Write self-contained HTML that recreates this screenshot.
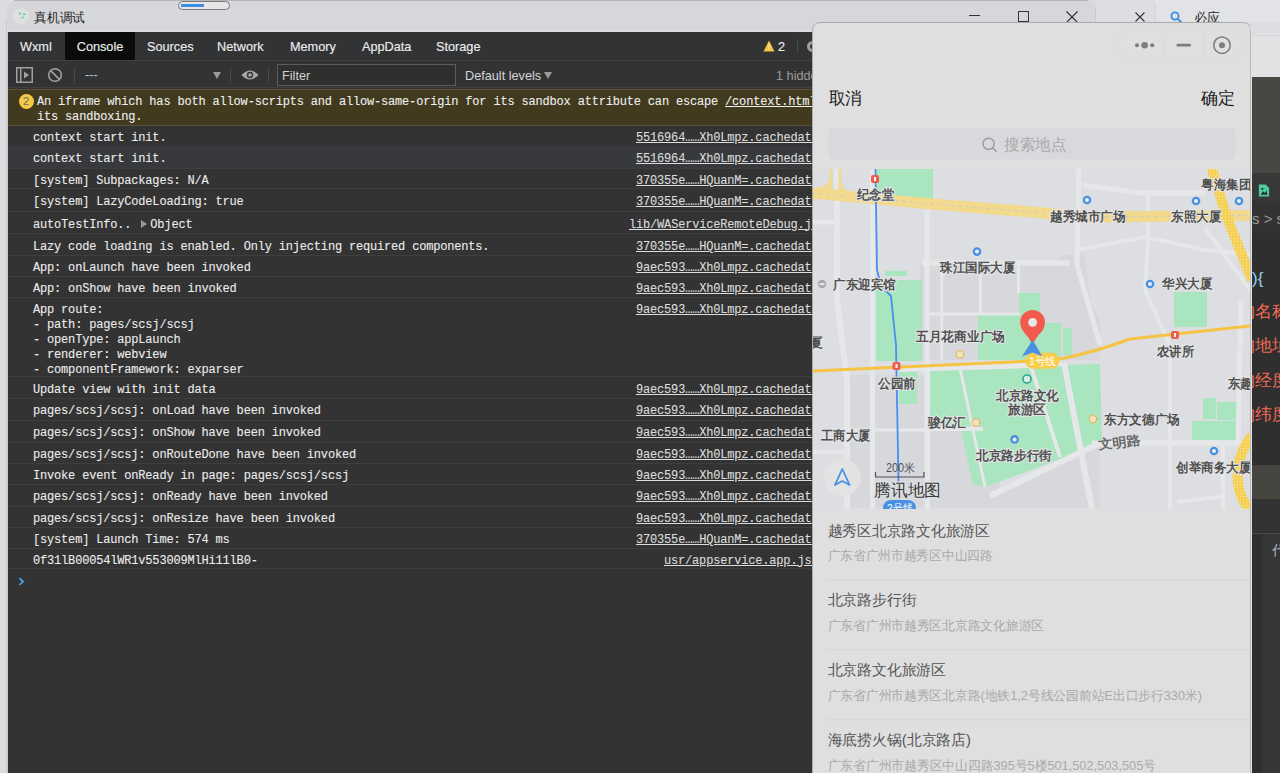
<!DOCTYPE html>
<html><head><meta charset="utf-8">
<style>
*{margin:0;padding:0;box-sizing:border-box}
html,body{width:1280px;height:773px;overflow:hidden;background:#dadcdf;font-family:"Liberation Sans",sans-serif}
.abs{position:absolute}
#titlebar{position:absolute;left:7px;top:1px;width:1089px;height:31px;background:#d6d7da;border-top-left-radius:8px;border-top-right-radius:8px}
#tab2{position:absolute;left:1096px;top:0;width:60px;height:32px;background:#dddee1;border-top-right-radius:8px;border-right:1px solid #d2d3d6}
#dev{position:absolute;left:8px;top:32px;width:1272px;height:741px;background:#333333;overflow:hidden}
#tabs{position:absolute;left:0;top:0;width:1272px;height:29px;background:#323335;border-bottom:1px solid #3f4042}
.tab{position:absolute;top:0;height:27px;line-height:30px;font-size:12.7px;color:#ececec;-webkit-text-stroke:0.15px currentColor}
#toolbar{position:absolute;left:0;top:29px;width:1272px;height:27px;background:#323335;border-bottom:1px solid #3f4042}
.tb{position:absolute;font-size:12.7px;color:#d6d6d6;line-height:28px;top:0}
.mono{font-family:"Liberation Mono",monospace;font-size:12px;letter-spacing:-0.18px;color:#ececec;white-space:pre;-webkit-text-stroke:0.1px currentColor}
.row{position:absolute;left:0;width:1272px;border-bottom:1px solid #3e3e3e}
.row .t{position:absolute;left:25px;margin-top:2px}
.row .l{position:absolute;text-decoration:underline;color:#dcdcdc;margin-top:2px}
.tri{display:inline-block;width:0;height:0;border-left:6px solid #9a9a9a;border-top:4.5px solid transparent;border-bottom:4.5px solid transparent;margin-left:2.5px;margin-right:3.5px;vertical-align:0px}
#warn{position:absolute;left:0;top:57px;width:1272px;height:37px;background:#413a1e;border-top:1px solid #5a5230;border-bottom:1px solid #5a5230}
#phone{position:absolute;left:812px;top:22px;width:438px;height:751px;background:#dfdfdf;border-top-left-radius:8px;border-top-right-radius:8px;overflow:hidden}
#rstrip{position:absolute;left:1250px;top:22px;width:30px;height:751px;background:#e2e2e4}
</style></head><body>
<div class="abs" style="left:6px;top:20px;width:2px;height:753px;background:#c9cbce"></div>
<div id="titlebar"></div>
<div class="abs" style="left:14px;top:0;width:1074px;height:1px;background:#b4b5b7"></div>
<div class="abs" style="left:7px;top:30px;width:1089px;height:2px;background:#dcdde0"></div>
<div class="abs" style="left:1096px;top:0;width:184px;height:40px;background:#e2e3e6"></div>
<div id="tab2"></div>
<div class="abs" style="left:1095px;top:8px;width:1px;height:24px;background:#c8c9cc"></div>
<div class="abs" style="left:13px;top:8px;width:16px;height:16px;border-radius:50%;background:#dfe0e2"></div>
<svg class="abs" style="left:17px;top:11px" width="10" height="8" viewBox="0 0 10 8"><path d="M2 1.5 L4 3.5" stroke="#58d68d" stroke-width="1.2"/><rect x="6" y="2.5" width="2.5" height="1.5" fill="#58d68d"/><rect x="4" y="5.5" width="3" height="2" fill="#7ee0a8"/></svg>
<svg class="abs" style="left:34px;top:9px" width="52" height="16"><text x="0" y="13" font-size="13" fill="#262626" textLength="51" lengthAdjust="spacingAndGlyphs">真机调试</text></svg>
<div class="abs" style="left:178px;top:1px;width:52px;height:9px;border-radius:5px;background:#e6e6e6;border:1.5px solid #7b7b7b"></div>
<div class="abs" style="left:181px;top:4px;width:23px;height:3px;background:#3d8ee8"></div>
<div class="abs" style="left:969px;top:15px;width:11px;height:1.2px;background:#333"></div>
<div class="abs" style="left:1018px;top:11px;width:11px;height:11px;border:1.2px solid #333"></div>
<svg class="abs" style="left:1066px;top:11px" width="12" height="12" viewBox="0 0 12 12"><path d="M0.5 0.5 L11.5 11.5 M11.5 0.5 L0.5 11.5" stroke="#333" stroke-width="1.1"/></svg>
<svg class="abs" style="left:1135px;top:12px" width="10" height="10" viewBox="0 0 10 10"><path d="M0.5 0.5 L9.5 9.5 M9.5 0.5 L0.5 9.5" stroke="#333" stroke-width="1.1"/></svg>
<svg class="abs" style="left:1170px;top:11px" width="13" height="13" viewBox="0 0 13 13"><circle cx="5" cy="5" r="3.6" fill="none" stroke="#3b8ee6" stroke-width="1.8"/><path d="M7.6 7.6 L11.5 11.5" stroke="#3b8ee6" stroke-width="2"/></svg>
<svg class="abs" style="left:1194px;top:9px" width="28" height="16"><text x="0" y="13" font-size="13" fill="#262626" textLength="26" lengthAdjust="spacingAndGlyphs">必应</text></svg>
<div id="dev">
  <div id="tabs">
    <div class="tab" style="left:12px">Wxml</div>
    <div class="tab" style="left:57px;width:70px;height:28px;background:#0b0b0b;text-align:center">Console</div>
    <div class="tab" style="left:139px">Sources</div>
    <div class="tab" style="left:209px">Network</div>
    <div class="tab" style="left:282px">Memory</div>
    <div class="tab" style="left:354px">AppData</div>
    <div class="tab" style="left:428px">Storage</div>
    <svg class="abs" style="left:755px;top:8px" width="12" height="12" viewBox="0 0 12 12"><path d="M6 0.5 L11.5 11.5 L0.5 11.5 Z" fill="#f4c542"/><rect x="5.4" y="4" width="1.2" height="4.5" fill="#f8e6a8"/><rect x="5.4" y="9.3" width="1.2" height="1.2" fill="#f8e6a8"/></svg>
    <div class="abs" style="left:799px;top:9px;width:11px;height:11px;border-radius:50%;border:3px solid #a0a0a0"></div>
    <div class="tab" style="left:770px">2</div>
    <div class="abs" style="left:789px;top:7px;width:1px;height:14px;background:#4a4a4a"></div>
  </div>
  <div id="toolbar">
    <svg class="abs" style="left:8px;top:6px" width="17" height="16" viewBox="0 0 17 16"><rect x="0.75" y="0.75" width="15.5" height="14.5" fill="none" stroke="#a0a0a0" stroke-width="1.5"/><rect x="4" y="0.75" width="1.5" height="14.5" fill="#a0a0a0"/><path d="M8 4.5 L13 8 L8 11.5 Z" fill="#a0a0a0"/></svg>
    <svg class="abs" style="left:39px;top:6px" width="16" height="16" viewBox="0 0 16 16"><circle cx="8" cy="8" r="6.3" fill="none" stroke="#a0a0a0" stroke-width="1.6"/><path d="M3.6 3.6 L12.4 12.4" stroke="#a0a0a0" stroke-width="1.6"/></svg>
    <div class="abs" style="left:66px;top:7px;width:1px;height:15px;background:#4a4a4a"></div>
    <div class="tb" style="left:77px;color:#c8c8c8">---</div>
    <svg class="abs" style="left:205px;top:11px" width="8" height="7" viewBox="0 0 8 7"><path d="M0 0 L8 0 L4 7 Z" fill="#9a9a9a"/></svg>
    <div class="abs" style="left:222px;top:7px;width:1px;height:15px;background:#4a4a4a"></div>
    <svg class="abs" style="left:233px;top:8px" width="18" height="12" viewBox="0 0 18 12"><path d="M0.5 6 Q9 -3 17.5 6 Q9 15 0.5 6 Z" fill="#a8a8a8"/><circle cx="9" cy="6" r="3.2" fill="#333"/><circle cx="9" cy="6" r="1.8" fill="#a8a8a8"/></svg>
    <div class="abs" style="left:260px;top:7px;width:1px;height:15px;background:#4a4a4a"></div>
    <div class="abs" style="left:269px;top:2.5px;width:179px;height:22px;border:1px solid #5c5c5c;background:#2f2f2f"></div>
    <div class="tb" style="left:274px;top:1px;color:#d0d0d0">Filter</div>
    <div class="tb" style="left:457px;top:1px">Default levels</div>
    <svg class="abs" style="left:536px;top:11px" width="8" height="7" viewBox="0 0 8 7"><path d="M0 0 L8 0 L4 7 Z" fill="#9a9a9a"/></svg>
    <div class="tb" style="left:768px;top:1px;color:#9a9a9a">1 hidden</div>
  </div>
  <div id="warn">
    <div class="abs" style="left:10.5px;top:4px;width:15px;height:15px;border-radius:50%;background:#f6c944"></div>
    <div class="abs" style="left:10.5px;top:4px;width:15px;line-height:15px;text-align:center;font-size:11px;color:#6a6a7a">2</div>
    <div class="abs mono" style="left:29px;top:4.6px;line-height:15.3px;color:#eee">An iframe which has both allow-scripts and allow-same-origin for its sandbox attribute can escape <u>/context.html</u>
its sandboxing.</div>
  </div>
<div class="row" style="top:93.5px;height:20.5px;border-bottom-color:transparent;"><div class="t mono" style="top:0;line-height:20.5px">context start init.</div><div class="l mono" style="left:628px;top:0;line-height:20.5px">5516964……Xh0Lmpz.cachedata:1</div></div>
<div class="row" style="top:114.0px;height:22.5px;background:#38393d;"><div class="t mono" style="top:0;line-height:22.5px">context start init.</div><div class="l mono" style="left:628px;top:0;line-height:22.5px">5516964……Xh0Lmpz.cachedata:1</div></div>
<div class="row" style="top:136.5px;height:20.5px;"><div class="t mono" style="top:0;line-height:20.5px">[system] Subpackages: N/A</div><div class="l mono" style="left:628px;top:0;line-height:20.5px">370355e……HQuanM=.cachedata:1</div></div>
<div class="row" style="top:157.0px;height:22.5px;"><div class="t mono" style="top:0;line-height:22.5px">[system] LazyCodeLoading: true</div><div class="l mono" style="left:628px;top:0;line-height:22.5px">370355e……HQuanM=.cachedata:1</div></div>
<div class="row" style="top:179.5px;height:22.5px;"><div class="t mono" style="top:0;line-height:22.5px">autoTestInfo.. <span class="tri"></span>Object</div><div class="l mono" style="left:621px;top:0;line-height:22.5px">lib/WAServiceRemoteDebug.js:1</div></div>
<div class="row" style="top:202.0px;height:22.0px;"><div class="t mono" style="top:0;line-height:22px">Lazy code loading is enabled. Only injecting required components.</div><div class="l mono" style="left:628px;top:0;line-height:22px">370355e……HQuanM=.cachedata:1</div></div>
<div class="row" style="top:224.0px;height:21.0px;"><div class="t mono" style="top:0;line-height:21px">App: onLaunch have been invoked</div><div class="l mono" style="left:628px;top:0;line-height:21px">9aec593……Xh0Lmpz.cachedata:1</div></div>
<div class="row" style="top:245.0px;height:21.0px;"><div class="t mono" style="top:0;line-height:21px">App: onShow have been invoked</div><div class="l mono" style="left:628px;top:0;line-height:21px">9aec593……Xh0Lmpz.cachedata:1</div></div>
<div class="row" style="top:266.0px;height:79.0px;"><div class="t mono" style="top:2.7px;line-height:15px">App route:<br>- path: pages/scsj/scsj<br>- openType: appLaunch<br>- renderer: webview<br>- componentFramework: exparser</div><div class="l mono" style="left:628px;top:0;line-height:21px">9aec593……Xh0Lmpz.cachedata:1</div></div>
<div class="row" style="top:345.0px;height:22.4px;"><div class="t mono" style="top:0;line-height:22.399999999999977px">Update view with init data</div><div class="l mono" style="left:628px;top:0;line-height:22.399999999999977px">9aec593……Xh0Lmpz.cachedata:1</div></div>
<div class="row" style="top:367.4px;height:21.6px;"><div class="t mono" style="top:0;line-height:21.600000000000023px">pages/scsj/scsj: onLoad have been invoked</div><div class="l mono" style="left:628px;top:0;line-height:21.600000000000023px">9aec593……Xh0Lmpz.cachedata:1</div></div>
<div class="row" style="top:389.0px;height:21.7px;"><div class="t mono" style="top:0;line-height:21.69999999999999px">pages/scsj/scsj: onShow have been invoked</div><div class="l mono" style="left:628px;top:0;line-height:21.69999999999999px">9aec593……Xh0Lmpz.cachedata:1</div></div>
<div class="row" style="top:410.7px;height:21.3px;"><div class="t mono" style="top:0;line-height:21.30000000000001px">pages/scsj/scsj: onRouteDone have been invoked</div><div class="l mono" style="left:628px;top:0;line-height:21.30000000000001px">9aec593……Xh0Lmpz.cachedata:1</div></div>
<div class="row" style="top:432.0px;height:21.4px;"><div class="t mono" style="top:0;line-height:21.399999999999977px">Invoke event onReady in page: pages/scsj/scsj</div><div class="l mono" style="left:628px;top:0;line-height:21.399999999999977px">9aec593……Xh0Lmpz.cachedata:1</div></div>
<div class="row" style="top:453.4px;height:21.4px;"><div class="t mono" style="top:0;line-height:21.400000000000034px">pages/scsj/scsj: onReady have been invoked</div><div class="l mono" style="left:628px;top:0;line-height:21.400000000000034px">9aec593……Xh0Lmpz.cachedata:1</div></div>
<div class="row" style="top:474.8px;height:21.2px;"><div class="t mono" style="top:0;line-height:21.19999999999999px">pages/scsj/scsj: onResize have been invoked</div><div class="l mono" style="left:628px;top:0;line-height:21.19999999999999px">9aec593……Xh0Lmpz.cachedata:1</div></div>
<div class="row" style="top:496.0px;height:20.7px;"><div class="t mono" style="top:0;line-height:20.700000000000045px">[system] Launch Time: 574 ms</div><div class="l mono" style="left:628px;top:0;line-height:20.700000000000045px">370355e……HQuanM=.cachedata:1</div></div>
<div class="row" style="top:516.7px;height:20.8px;"><div class="t mono" style="top:0;line-height:20.799999999999955px">0f31lB00054lWR1v553009MlHi11lB0-</div><div class="l mono" style="left:656px;top:0;line-height:20.799999999999955px">usr/appservice.app.js:1</div></div>
  <svg class="abs" style="left:10px;top:544.5px" width="8" height="10" viewBox="0 0 8 10"><path d="M1.5 1.2 L5 4.6 L1.5 8" fill="none" stroke="#4ba3f7" stroke-width="1.7"/></svg>
</div>
<svg class="abs" style="left:812px;top:22px;font-family:'Liberation Sans',sans-serif" width="438" height="751" viewBox="812 22 438 751"><defs><clipPath id="pc"><path d="M812 773 L812 30 Q812 22 820 22 L1243 22 Q1251 22 1251 30 L1251 773 Z"/></clipPath><clipPath id="mc"><rect x="812" y="169" width="438" height="340"/></clipPath><pattern id="dots" width="3" height="3" patternUnits="userSpaceOnUse"><rect width="3" height="3" fill="#f6cf55"/><rect x="1" y="1" width="1" height="1" fill="#fbe7a3"/></pattern></defs><g clip-path="url(#pc)"><rect x="812" y="22" width="438" height="751" fill="#dfdfdf"/><rect x="1118" y="28" width="124" height="35" rx="17.5" fill="none" stroke="#dcdcdc" stroke-width="0.8"/><circle cx="1137" cy="45.2" r="2" fill="#7d7d7d"/><circle cx="1144.6" cy="45.2" r="3.3" fill="#7d7d7d"/><circle cx="1152.2" cy="45.2" r="2" fill="#7d7d7d"/><rect x="1164" y="36" width="1" height="18" fill="#d6d8db"/><rect x="1176.5" y="43.8" width="14.5" height="2.8" rx="1.4" fill="#7d7d7d"/><rect x="1203.5" y="36" width="1" height="18" fill="#d6d8db"/><circle cx="1222" cy="45.2" r="8.2" fill="none" stroke="#7d7d7d" stroke-width="1.5"/><circle cx="1222" cy="45.2" r="3" fill="#7d7d7d"/><text x="828.5" y="103.8" font-size="17" fill="#1a1a1a" textLength="33.5" lengthAdjust="spacingAndGlyphs" >取消</text><text x="1200.5" y="103.8" font-size="17" fill="#1a1a1a" textLength="34.0" lengthAdjust="spacingAndGlyphs" >确定</text><rect x="828.5" y="128" width="407" height="31.5" rx="5" fill="#d8d9dc"/><circle cx="988.6" cy="143.8" r="5.6" fill="none" stroke="#9a9a9a" stroke-width="1.4"/><path d="M992.6 147.8 L996.4 151.6" stroke="#9a9a9a" stroke-width="1.5"/><text x="1004" y="149.6" font-size="15.5" fill="#a9a9a9" textLength="62" lengthAdjust="spacingAndGlyphs" >搜索地点</text><g clip-path="url(#mc)"><rect x="812" y="169" width="438" height="340" fill="#dcdee1"/><polygon points="920,263 1070,263 1100,320 1100,360 920,360" fill="#d6d8dc"/><polygon points="848,375 930,375 930,508 848,508" fill="#d6d8dc"/><polygon points="930,430 1000,430 1000,508 930,508" fill="#d6d8dc"/><polygon points="990,496 1100,443 1100,508 990,508" fill="#d6d8dc"/><polygon points="1060,255 1085,255 1095,350 1060,350" fill="#d6d8dc"/><polygon points="877,169 933,169 933,200 877,200" fill="#a9e5bf"/><polygon points="885,271 907,271 907,276 885,276" fill="#a9e5bf"/><polygon points="876,280 922,280 922,361 876,361" fill="#a9e5bf"/><polygon points="899,368 917,368 917,404 899,404" fill="#a9e5bf"/><polygon points="928,368 1100,364 1102,444 985,487 973,484 961,430 928,430" fill="#a9e5bf"/><polygon points="978,315 1020,315 1020,360 978,360" fill="#a9e5bf"/><polygon points="1019,293 1040,293 1040,360 1019,360" fill="#a9e5bf"/><polygon points="1040,323 1061,323 1061,360 1040,360" fill="#a9e5bf"/><polygon points="1063,328 1072,328 1072,355 1063,355" fill="#a9e5bf"/><polygon points="1174,292 1207,292 1207,327 1174,327" fill="#a9e5bf"/><polygon points="1203,398 1216,398 1216,419 1203,419" fill="#a9e5bf"/><polygon points="1217,402 1238,402 1238,420 1217,420" fill="#a9e5bf"/><polygon points="1192,421 1236,421 1236,440 1192,440" fill="#a9e5bf"/><path d="M837 169 L837 300 L847 380 L847 509" fill="none" stroke="#e6e7e9" stroke-width="6"/><path d="M872.5 169 L872.5 509" fill="none" stroke="#e6e7e9" stroke-width="5"/><path d="M812 222 L834 222" fill="none" stroke="#e6e7e9" stroke-width="5"/><path d="M927 205 L927 509" fill="none" stroke="#e6e7e9" stroke-width="5"/><path d="M922 263 L1070 263" fill="none" stroke="#e6e7e9" stroke-width="5"/><path d="M941.8 263 L941.8 360" fill="none" stroke="#e6e7e9" stroke-width="3"/><path d="M980.5 263 L980.5 315" fill="none" stroke="#e6e7e9" stroke-width="3"/><path d="M1018.5 263 L1018.5 293" fill="none" stroke="#e6e7e9" stroke-width="3"/><path d="M925 314 L1020 314" fill="none" stroke="#e6e7e9" stroke-width="3"/><path d="M1079 169 L1077 265 L1100 345" fill="none" stroke="#e6e7e9" stroke-width="5"/><path d="M1083 185 L1140 193 L1205 193" fill="none" stroke="#e6e7e9" stroke-width="5"/><path d="M1148 193 L1148 240 L1145 290 L1170 345 L1170 509" fill="none" stroke="#e6e7e9" stroke-width="4"/><path d="M1077 250 L1145 237 L1205 250 L1250 255" fill="none" stroke="#e6e7e9" stroke-width="4"/><path d="M1205 228 L1250 290" fill="none" stroke="#e6e7e9" stroke-width="4"/><path d="M1031 367 L1060 457" fill="none" stroke="#e6e7e9" stroke-width="4"/><path d="M1064 363 L1092 509" fill="none" stroke="#e6e7e9" stroke-width="6"/><path d="M990 496 L1100 443" fill="none" stroke="#e6e7e9" stroke-width="6"/><path d="M1092 443 L1250 443" fill="none" stroke="#e6e7e9" stroke-width="5"/><path d="M1241 300 L1238 443" fill="none" stroke="#e6e7e9" stroke-width="5"/><path d="M1223 443 L1223 509" fill="none" stroke="#e6e7e9" stroke-width="4"/><path d="M928 429 L983 429" fill="none" stroke="#e6e7e9" stroke-width="4"/><path d="M928 368 L928 509" fill="none" stroke="#e6e7e9" stroke-width="4"/><path d="M1177 502 L1225 496" fill="none" stroke="#e6e7e9" stroke-width="4"/><path d="M812 452 L847 452" fill="none" stroke="#e6e7e9" stroke-width="4"/><path d="M900 369 L1032 365 L1062 363" fill="none" stroke="#e6e7e9" stroke-width="6"/><path d="M850 430 L928 430" fill="none" stroke="#e6e7e9" stroke-width="3"/><path d="M960 368 L985 487" fill="none" stroke="#e6e7e9" stroke-width="3"/><path d="M812 193 L932 204 L1032 212 L1090 217 L1250 215.5" fill="none" stroke="#f3d98b" stroke-width="11"/><path d="M812 193 L932 204 L1032 212 L1090 217 L1250 215.5" fill="none" stroke="#c6c9d0" stroke-width="1" stroke-dasharray="3 4"/><path d="M831 169 L831 192 M840 169 L840 193" fill="none" stroke="#f3d98b" stroke-width="2.5"/><path d="M818 190 Q829 188 831 180 M852 196 Q842 194 840 184" fill="none" stroke="#f3d98b" stroke-width="4"/><path d="M1211 166 L1226.6 216.6 L1252 280" fill="none" stroke="url(#dots)" stroke-width="10"/><path d="M1252 436 Q1236 455 1238 483 Q1240 500 1252 512" fill="none" stroke="url(#dots)" stroke-width="10"/><path d="M812 371 L1032 361 L1060 359 Q1095 352 1130 339 L1250 326" fill="none" stroke="#f6c343" stroke-width="3"/><path d="M875.5 169 L877 270 Q880 287 891 296 L896 345 L899 509" fill="none" stroke="#4a8ef0" stroke-width="1.8"/><text x="857" y="199.2" font-size="12.6" fill="#505050" textLength="37" lengthAdjust="spacingAndGlyphs" font-weight="bold" stroke="#e4e5e7" stroke-width="2" paint-order="stroke">纪念堂</text><text x="940" y="272.0" font-size="12.6" fill="#505050" textLength="75" lengthAdjust="spacingAndGlyphs" font-weight="bold" stroke="#e4e5e7" stroke-width="2" paint-order="stroke">珠江国际大厦</text><text x="833" y="288.5" font-size="12.6" fill="#505050" textLength="63" lengthAdjust="spacingAndGlyphs" font-weight="bold" stroke="#e4e5e7" stroke-width="2" paint-order="stroke">广东迎宾馆</text><text x="916" y="340.5" font-size="12.6" fill="#505050" textLength="89" lengthAdjust="spacingAndGlyphs" font-weight="bold" stroke="#e4e5e7" stroke-width="2" paint-order="stroke">五月花商业广场</text><text x="1050" y="220.5" font-size="12.6" fill="#505050" textLength="75.5" lengthAdjust="spacingAndGlyphs" font-weight="bold" stroke="#e4e5e7" stroke-width="2" paint-order="stroke">越秀城市广场</text><text x="1171" y="221.1" font-size="12.6" fill="#505050" textLength="50" lengthAdjust="spacingAndGlyphs" font-weight="bold" stroke="#e4e5e7" stroke-width="2" paint-order="stroke">东照大厦</text><text x="1201" y="188.5" font-size="12.6" fill="#505050" textLength="50.5" lengthAdjust="spacingAndGlyphs" font-weight="bold" stroke="#e4e5e7" stroke-width="2" paint-order="stroke">粤海集团</text><text x="1162" y="287.5" font-size="12.6" fill="#505050" textLength="50" lengthAdjust="spacingAndGlyphs" font-weight="bold" stroke="#e4e5e7" stroke-width="2" paint-order="stroke">华兴大厦</text><text x="878" y="387.5" font-size="12.6" fill="#505050" textLength="38" lengthAdjust="spacingAndGlyphs" font-weight="bold" stroke="#e4e5e7" stroke-width="2" paint-order="stroke">公园前</text><text x="928" y="426.5" font-size="12.6" fill="#505050" textLength="38" lengthAdjust="spacingAndGlyphs" font-weight="bold" stroke="#e4e5e7" stroke-width="2" paint-order="stroke">骏亿汇</text><text x="821" y="440.0" font-size="12.6" fill="#505050" textLength="49" lengthAdjust="spacingAndGlyphs" font-weight="bold" stroke="#e4e5e7" stroke-width="2" paint-order="stroke">工商大厦</text><text x="996" y="400.0" font-size="12.6" fill="#505050" textLength="63" lengthAdjust="spacingAndGlyphs" font-weight="bold" stroke="#e4e5e7" stroke-width="2" paint-order="stroke">北京路文化</text><text x="1008" y="414.0" font-size="12.6" fill="#505050" textLength="38" lengthAdjust="spacingAndGlyphs" font-weight="bold" stroke="#e4e5e7" stroke-width="2" paint-order="stroke">旅游区</text><text x="976" y="460.0" font-size="12.6" fill="#505050" textLength="76" lengthAdjust="spacingAndGlyphs" font-weight="bold" stroke="#e4e5e7" stroke-width="2" paint-order="stroke">北京路步行街</text><text x="1157" y="355.9" font-size="12.6" fill="#505050" textLength="37" lengthAdjust="spacingAndGlyphs" font-weight="bold" stroke="#e4e5e7" stroke-width="2" paint-order="stroke">农讲所</text><text x="1228" y="388.0" font-size="12.6" fill="#505050" textLength="37" lengthAdjust="spacingAndGlyphs" font-weight="bold" stroke="#e4e5e7" stroke-width="2" paint-order="stroke">东趣馆</text><text x="1104" y="423.5" font-size="12.6" fill="#505050" textLength="76" lengthAdjust="spacingAndGlyphs" font-weight="bold" stroke="#e4e5e7" stroke-width="2" paint-order="stroke">东方文德广场</text><text x="1176" y="472.0" font-size="12.6" fill="#505050" textLength="75" lengthAdjust="spacingAndGlyphs" font-weight="bold" stroke="#e4e5e7" stroke-width="2" paint-order="stroke">创举商务大厦</text><text x="806" y="346.5" font-size="12.6" fill="#505050" textLength="17" lengthAdjust="spacingAndGlyphs" font-weight="bold" stroke="#e4e5e7" stroke-width="2" paint-order="stroke">厦</text><text x="1098.5" y="446.7" font-size="13" fill="#6a6a6a" textLength="42.5" lengthAdjust="spacingAndGlyphs" font-weight="bold" transform="rotate(-7 1120 442)">文明路</text><circle cx="977" cy="251.6" r="4.3" fill="#4a90e2"/><circle cx="977" cy="251.6" r="2" fill="#e9f0fa"/><circle cx="1087" cy="200" r="4.3" fill="#4a90e2"/><circle cx="1087" cy="200" r="2" fill="#e9f0fa"/><circle cx="1196" cy="201" r="4.3" fill="#4a90e2"/><circle cx="1196" cy="201" r="2" fill="#e9f0fa"/><circle cx="1239" cy="201" r="4.3" fill="#4a90e2"/><circle cx="1239" cy="201" r="2" fill="#e9f0fa"/><circle cx="1150" cy="284" r="4.3" fill="#4a90e2"/><circle cx="1150" cy="284" r="2" fill="#e9f0fa"/><circle cx="1214" cy="451" r="4.3" fill="#4a90e2"/><circle cx="1214" cy="451" r="2" fill="#e9f0fa"/><circle cx="1014.6" cy="439.4" r="4.3" fill="#4a90e2"/><circle cx="1014.6" cy="439.4" r="2" fill="#e9f0fa"/><circle cx="960" cy="354.4" r="3.8" fill="#efe3c2" stroke="#f5a93c" stroke-width="1.3" stroke-dasharray="1.6 0.8"/><circle cx="976" cy="422.6" r="3.8" fill="#efe3c2" stroke="#f5a93c" stroke-width="1.3" stroke-dasharray="1.6 0.8"/><circle cx="1093" cy="419" r="3.8" fill="#efe3c2" stroke="#f5a93c" stroke-width="1.3" stroke-dasharray="1.6 0.8"/><circle cx="822" cy="284" r="4.2" fill="#a9a9a9"/><rect x="819.5" y="283" width="5" height="2.2" fill="#e8e8e8"/><circle cx="1027" cy="379" r="4" fill="#d9f0e8" stroke="#2aa88f" stroke-width="1.6"/><rect x="871" y="175" width="8" height="8" rx="2" fill="#ee5c4d"/><rect x="874" y="177" width="2" height="4" fill="#fff"/><rect x="892.5" y="362" width="8" height="8" rx="2" fill="#ee5c4d"/><rect x="895.5" y="364" width="2" height="4" fill="#fff"/><rect x="1171" y="331" width="8" height="8" rx="2" fill="#ee5c4d"/><rect x="1174" y="333" width="2" height="4" fill="#fff"/><rect x="1025.4" y="352.8" width="34" height="16" rx="8" fill="#f8cd4a"/><text x="1029" y="365" font-size="11" fill="#fff" textLength="27" lengthAdjust="spacingAndGlyphs">1号线</text><rect x="883" y="500" width="33" height="16" rx="8" fill="#4a90e2"/><text x="887" y="512" font-size="11" fill="#fff" textLength="26" lengthAdjust="spacingAndGlyphs">2号线</text><path d="M1032.6 344.5 Q1028 336 1023 331 Q1020.2 327 1020.2 322.3 A12.4 12.4 0 0 1 1045 322.3 Q1045 327 1042.2 331 Q1037 336 1032.6 344.5 Z" fill="#f25a4e"/><circle cx="1032.6" cy="322.3" r="4.4" fill="#e8e8e8"/><path d="M1022 356.4 L1032.6 340 L1042.4 356.4 L1032.6 352.6 Z" fill="#4a90e2"/><circle cx="842.3" cy="477.8" r="18.6" fill="#e3e3e3"/><path d="M835 485 L842.3 469 L849.6 485 L842.3 481 Z" fill="none" stroke="#4a90e2" stroke-width="1.8" stroke-linejoin="round"/><text x="886" y="471.5" font-size="12" fill="#505050" textLength="29" lengthAdjust="spacingAndGlyphs">200米</text><path d="M875.5 472 L875.5 477 L924 477 L924 472" fill="none" stroke="#505050" stroke-width="1.2"/><text x="874" y="495.6" font-size="17" fill="#3a3a3a" textLength="67" lengthAdjust="spacingAndGlyphs" stroke="#dcdee1" stroke-width="3" paint-order="stroke">腾讯地图</text></g><text x="827.6" y="536.1" font-size="15" fill="#555555" textLength="162.39999999999998" lengthAdjust="spacingAndGlyphs" >越秀区北京路文化旅游区</text><text x="827.6" y="560.1" font-size="13" fill="#a9a9a9" textLength="165.10000000000002" lengthAdjust="spacingAndGlyphs" >广东省广州市越秀区中山四路</text><text x="827.6" y="605.4" font-size="15" fill="#555555" textLength="89.39999999999998" lengthAdjust="spacingAndGlyphs" >北京路步行街</text><text x="827.6" y="629.7" font-size="13" fill="#a9a9a9" textLength="216.39999999999998" lengthAdjust="spacingAndGlyphs" >广东省广州市越秀区北京路文化旅游区</text><text x="827.6" y="675.4" font-size="15" fill="#555555" textLength="118.39999999999998" lengthAdjust="spacingAndGlyphs" >北京路文化旅游区</text><text x="827.6" y="699.7" font-size="13" fill="#a9a9a9" textLength="374.4" lengthAdjust="spacingAndGlyphs" >广东省广州市越秀区北京路(地铁1,2号线公园前站E出口步行330米)</text><text x="827.6" y="745.4" font-size="15" fill="#555555" textLength="143.39999999999998" lengthAdjust="spacingAndGlyphs" >海底捞火锅(北京路店)</text><text x="827.6" y="769.7" font-size="13" fill="#a9a9a9" textLength="328.4" lengthAdjust="spacingAndGlyphs" >广东省广州市越秀区中山四路395号5楼501,502,503,505号</text><rect x="827.6" y="579.2" width="422" height="1" fill="#d3d5d9"/><rect x="827.6" y="649.2" width="422" height="1" fill="#d3d5d9"/><rect x="827.6" y="719.2" width="422" height="1" fill="#d3d5d9"/></g><path d="M812.5 773 L812.5 30.5 Q812.5 22.5 820.5 22.5 L1242.5 22.5 Q1250.5 22.5 1250.5 30.5 L1250.5 773" fill="none" stroke="#ababab" stroke-width="1"/></svg>
<div id="rstrip">
  <div class="abs" style="left:0;top:8px;width:1px;height:743px;background:#b9b9b9;z-index:5"></div><div class="abs" style="left:1px;top:8px;width:1px;height:743px;background:#e3e3e3;z-index:5"></div>
  <div class="abs" style="left:0;top:0;width:30px;height:12px;background:#dcdde0"></div><div class="abs" style="left:0;top:13px;width:30px;height:1px;background:#d4d5d8"></div><div class="abs" style="left:0;top:55px;width:30px;height:96px;background:#484744"></div>
  <div class="abs" style="left:0;top:151px;width:30px;height:28px;background:#383838"></div>
  <svg class="abs" style="left:8px;top:161px" width="12" height="15" viewBox="0 0 14 16"><path d="M1 1 L9 1 L13 5 L13 15 L1 15 Z" fill="#4ec9a0"/><path d="M3 13 L6 9 L8 11 L10 8 L11 13 Z" fill="#2f2f2f"/><circle cx="5" cy="6" r="1.3" fill="#2f2f2f"/></svg>
  <div class="abs" style="left:0;top:179px;width:30px;height:32px;background:#333"></div>
  <div class="abs" style="left:2px;top:188px;font-size:15px;color:#9a9a9a;white-space:pre">s &gt; s</div>
  <div class="abs" style="left:0;top:211px;width:30px;height:540px;background:#2f2f2f"></div>
  <div class="abs" style="left:2px;top:247px;font-size:17px;color:#8fd3e8;white-space:pre">){</div>
  <svg class="abs" style="left:0;top:268px" width="30" height="160"><g font-size="17" fill="#f06a55"><text x="-12" y="27" textLength="51" lengthAdjust="spacingAndGlyphs">的名称</text><text x="-12" y="60.5" textLength="51" lengthAdjust="spacingAndGlyphs">的地址</text><text x="-12" y="96" textLength="51" lengthAdjust="spacingAndGlyphs">的经度</text><text x="-12" y="129.5" textLength="51" lengthAdjust="spacingAndGlyphs">的纬度</text></g></svg>
  <div class="abs" style="left:0;top:443px;width:30px;height:34px;background:#47453f"></div>
  <div class="abs" style="left:0;top:477px;width:30px;height:33px;background:#333"></div>
  <div class="abs" style="left:0;top:511px;width:30px;height:1px;background:#4a4a4a"></div>
  <div class="abs" style="left:12px;top:512px;width:18px;height:239px;background:#363636"></div>
  <svg class="abs" style="left:0;top:516px" width="30" height="22"><text x="22" y="17" font-size="14" fill="#b8b8b8">代</text></svg>
</div>
</body></html>
